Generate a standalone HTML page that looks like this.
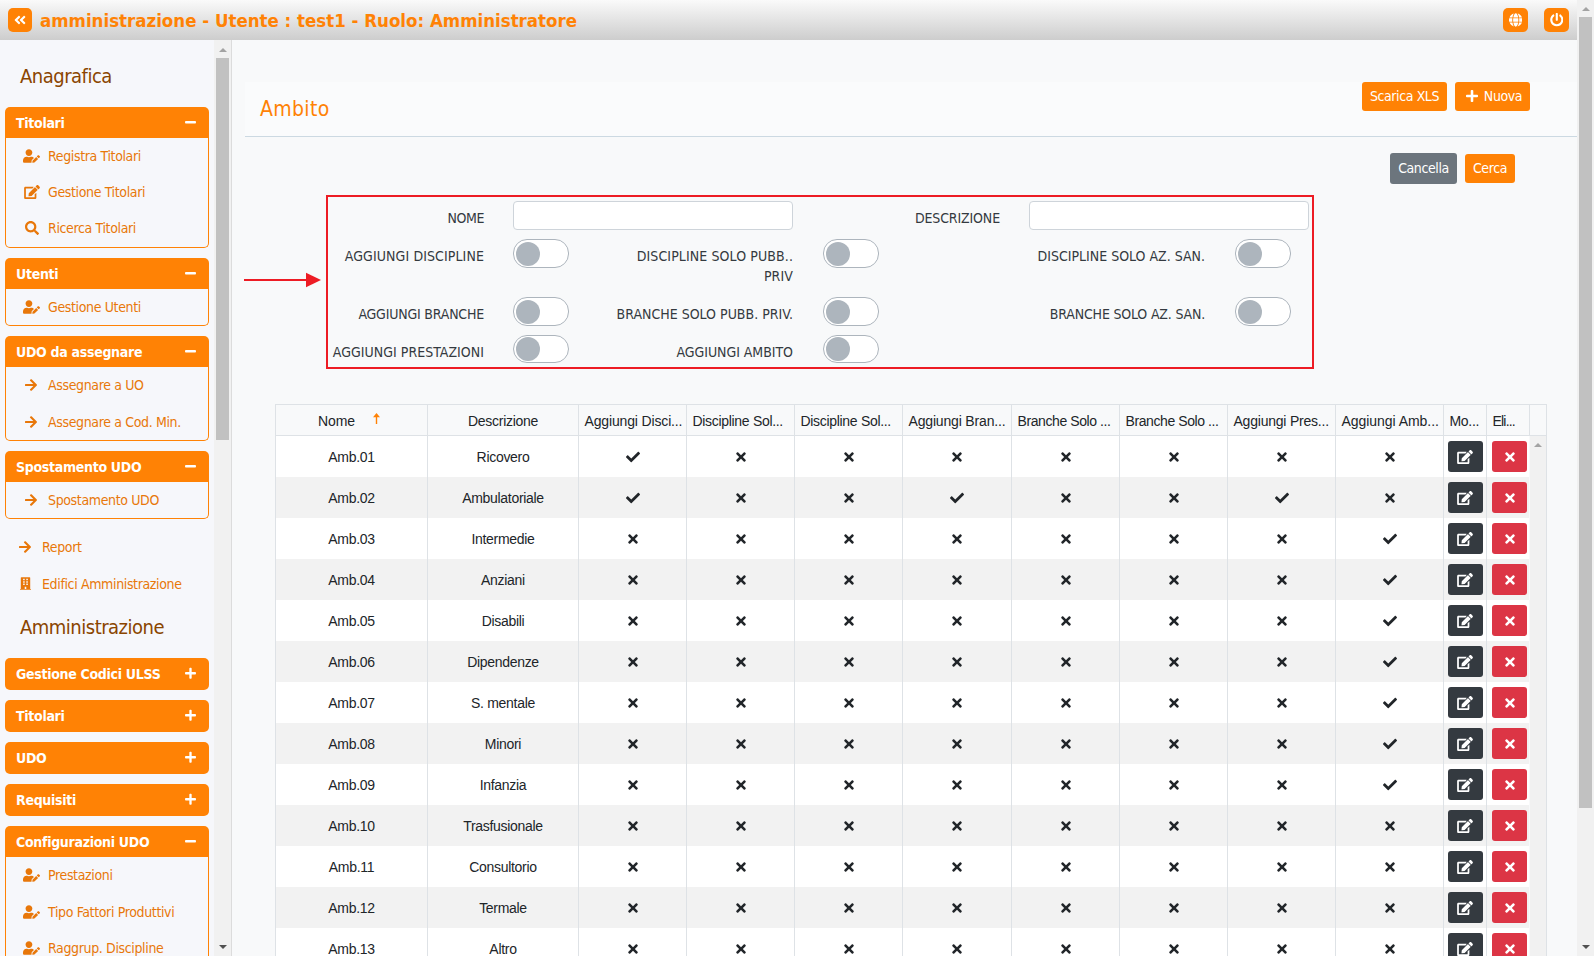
<!DOCTYPE html>
<html lang="it"><head><meta charset="utf-8"><title>Ambito</title>
<style>
*{box-sizing:border-box}
html,body{margin:0;padding:0}
body{width:1594px;height:956px;overflow:hidden;position:relative;background:#f8f9fa;font-family:"DejaVu Sans Condensed","Liberation Sans",sans-serif;font-size:14px;color:#212529}
.ic{display:inline-block;fill:currentColor}
#hdr{position:absolute;left:0;top:0;width:1577px;height:40px;background:linear-gradient(#fafafa,#cdcdcd);z-index:5}
.hb{position:absolute;top:8px;width:24px;height:24px;border-radius:5px;background:#ff8205}
.hb.w25{width:25px}
.ttl{position:absolute;left:40px;top:9px;font-weight:bold;font-size:18.500px;line-height:24px;color:#ff8205;white-space:nowrap;letter-spacing:0}
#side{position:absolute;left:0;top:40px;width:214px;height:916px;background:#f6f7fb;overflow:hidden}
#ssb{position:absolute;left:214px;top:40px;width:18px;height:916px;background:#f1f1f1;border-right:1px solid #dcdcdc}
#psb{position:absolute;left:1577px;top:0;width:17px;height:956px;background:#f1f1f1}
.th{position:absolute;left:2px;width:13px;background:#c1c1c1}
#ssb .th{left:2px}
.ua{position:absolute;width:0;height:0;border-left:4px solid transparent;border-right:4px solid transparent;border-bottom:4px solid #a3a3a3}
.da{position:absolute;width:0;height:0;border-left:4px solid transparent;border-right:4px solid transparent;border-top:4px solid #505050}
.sh{position:absolute;left:20px;font-size:20px;line-height:26px;color:#8a4500;letter-spacing:-0.5px;white-space:nowrap}
.pnl{position:absolute;left:5px;width:204px}
.ph{height:31px;background:#ff8205;border-radius:5px 5px 0 0;position:relative;color:#fff}
.ph.closed{border-radius:5px;height:32px}
.pt{position:absolute;left:11px;top:7px;font-weight:bold;font-size:14px;line-height:18px;letter-spacing:-0.3px;white-space:nowrap}
.pb{position:relative;border:1px solid #ff8205;border-top:0;border-radius:0 0 5px 5px}
.it,.lnk{position:absolute;left:0;height:20px;color:#e8770a;white-space:nowrap}
.lnk{left:0}
.it span{position:absolute;left:42px;top:0;line-height:20px;letter-spacing:-0.36px}
.lnk span{position:absolute;left:42px;top:0;line-height:20px;letter-spacing:-0.36px}
#main{position:absolute;left:0;top:0;width:1577px;height:956px;overflow:hidden}
.card{position:absolute;left:245px;top:82px;width:1332px;height:55px;background:#fafbfc;border-bottom:1px solid #ccd9e2}
.ct{position:absolute;left:15px;top:13px;font-size:21px;line-height:28px;color:#ff8205;letter-spacing:0.35px}
.btn{position:absolute;border-radius:3px;color:#fff;text-align:center;white-space:nowrap;letter-spacing:-0.4px;line-height:28px}
.btn.or{background:#ff8205}
.btn.gy{background:#6c757d;line-height:30px}
.redbox{position:absolute;left:326px;top:195px;width:988px;height:174px;border:2px solid #ed1c24}
.lb{position:absolute;text-align:right;line-height:20px;letter-spacing:0.1px;margin-top:1px;color:#343a40;white-space:nowrap}
.inp{position:absolute;width:280px;height:29px;background:#fff;border:1px solid #ced4da;border-radius:4px}
.tg{position:absolute;width:56px;height:28px;border:1px solid #adb5bd;border-radius:14px;background:#fff}
.tg i{position:absolute;left:2px;top:1px;width:24px;height:24px;border-radius:50%;background:#adb5bd}
.grid{position:absolute;left:275px;top:404px;width:1272px;height:560px;font-family:"Liberation Sans",sans-serif;font-size:14px;color:#212529}
.gh{position:absolute;left:0;top:0;width:1272px;height:32px;background:#f8f9fa;border-top:1px solid #dee2e6;border-bottom:1px solid #dee2e6;border-right:1px solid #dee2e6}
.hc{position:absolute;top:0;height:30px;line-height:32px;padding-left:5.500px;white-space:nowrap;overflow:hidden;letter-spacing:-0.1px}
.hc.ctr{text-align:center;padding-left:0}
.srt{position:absolute;left:96px;top:8px;fill:#ff8205}
.gr{position:absolute;left:0;width:1254px;height:41px;background:#fff}
.gr.alt{background:#f2f2f2}
.gc{position:absolute;top:0;height:41px;line-height:43px;overflow:hidden;text-align:center;white-space:nowrap;font-size:14px;letter-spacing:-0.3px}
.vl{position:absolute;top:0;width:1px;height:560px;background:#dee2e6}
.bt{position:absolute;left:5px;top:5px;width:35px;height:31px;border-radius:3px}
.bt.dk{background:#343a40}
.bt.rd{background:#dc3545}
.gsb{position:absolute;left:1255px;top:32px;width:16px;height:530px;background:#f1f1f1}
.gsb .ua{left:4px;top:7px;border-bottom-color:#a3a3a3}

</style></head><body>
<svg width="0" height="0" style="position:absolute"><defs><symbol id="i-check" viewBox="0 0 512 512"><path d="M173.898 439.404l-166.4-166.4c-9.997-9.997-9.997-26.206 0-36.204l36.203-36.204c9.997-9.998 26.207-9.998 36.204 0L192 312.69 432.095 72.596c9.997-9.997 26.207-9.997 36.204 0l36.203 36.204c9.997 9.997 9.997 26.206 0 36.204l-294.4 294.401c-9.998 9.997-26.207 9.997-36.204-.001z"/></symbol><symbol id="i-times" viewBox="0 0 352 512"><path d="M242.72 256l100.07-100.07c12.28-12.28 12.28-32.19 0-44.48l-22.24-22.24c-12.28-12.28-32.19-12.28-44.48 0L176 189.28 75.93 89.21c-12.28-12.28-32.19-12.28-44.48 0L9.21 111.45c-12.28 12.28-12.28 32.19 0 44.48L109.28 256 9.21 356.07c-12.28 12.28-12.28 32.19 0 44.48l22.24 22.24c12.28 12.28 32.2 12.28 44.48 0L176 322.72l100.07 100.07c12.28 12.28 32.2 12.28 44.48 0l22.24-22.24c12.28-12.28 12.28-32.19 0-44.48L242.72 256z"/></symbol><symbol id="i-plus" viewBox="0 0 448 512"><path d="M416 208H272V64c0-17.67-14.33-32-32-32h-32c-17.67 0-32 14.33-32 32v144H32c-17.67 0-32 14.33-32 32v32c0 17.67 14.33 32 32 32h144v144c0 17.67 14.33 32 32 32h32c17.67 0 32-14.33 32-32V304h144c17.67 0 32-14.33 32-32v-32c0-17.67-14.33-32-32-32z"/></symbol><symbol id="i-minus" viewBox="0 0 448 512"><path d="M416 208H32c-17.67 0-32 14.33-32 32v32c0 17.67 14.33 32 32 32h384c17.67 0 32-14.33 32-32v-32c0-17.67-14.33-32-32-32z"/></symbol><symbol id="i-search" viewBox="0 0 512 512"><path d="M505 442.7L405.3 343c-4.5-4.5-10.6-7-17-7H372c27.6-35.3 44-79.7 44-128C416 93.1 322.9 0 208 0S0 93.1 0 208s93.1 208 208 208c48.3 0 92.7-16.4 128-44v16.3c0 6.4 2.5 12.5 7 17l99.7 99.7c9.4 9.4 24.6 9.4 33.9 0l28.3-28.3c9.4-9.4 9.4-24.6.1-34zM208 336c-70.7 0-128-57.2-128-128 0-70.7 57.2-128 128-128 70.7 0 128 57.2 128 128 0 70.7-57.2 128-128 128z"/></symbol><symbol id="i-arrow-right" viewBox="0 0 448 512"><path d="M190.5 66.9l22.2-22.2c9.4-9.4 24.6-9.4 33.9 0L441 239c9.4 9.4 9.4 24.6 0 33.9L246.6 467.3c-9.4 9.4-24.6 9.4-33.9 0l-22.2-22.2c-9.5-9.5-9.3-25 .4-34.3L311.4 296H24c-13.3 0-24-10.7-24-24v-32c0-13.3 10.7-24 24-24h287.4L190.9 101.2c-9.8-9.3-10-24.800-.4-34.3z"/></symbol><symbol id="i-edit" viewBox="0 0 576 512"><path d="M402.6 83.2l90.2 90.2c3.8 3.8 3.8 10 0 13.800L274.4 405.6l-92.8 10.3c-12.4 1.400-22.9-9.100-21.500-21.500l10.300-92.800L388.800 83.200c3.800-3.800 10-3.800 13.800 0zm162-22.900l-48.800-48.800c-15.200-15.200-39.900-15.200-55.200 0l-35.400 35.400c-3.800 3.800-3.800 10 0 13.800l90.200 90.200c3.800 3.800 10 3.800 13.800 0l35.400-35.400c15.200-15.300 15.200-40 0-55.200zM384 346.200V448H64V128h229.800c3.200 0 6.200-1.300 8.500-3.500l40-40c7.600-7.600 2.200-20.500-8.500-20.500H48C21.500 64 0 85.500 0 112v352c0 26.500 21.500 48 48 48h352c26.500 0 48-21.500 48-48V306.200c0-10.700-12.900-16-20.500-8.500l-40 40c-2.200 2.300-3.500 5.300-3.500 8.500z"/></symbol><symbol id="i-power" viewBox="0 0 512 512"><path d="M400 54.1c63 45 104 118.600 104 201.900 0 136.800-110.800 247.700-247.500 248C120 504.300 8.200 393 8 256.400 7.900 173.100 48.900 99.300 111.800 54.200c11.700-8.300 28-4.800 35 7.700L162.600 90c5.900 10.500 3.100 23.800-6.600 31-41.500 30.800-68 79.600-68 134.900-.1 92.300 74.500 168.100 168 168.100 91.600 0 168.600-74.200 168-169.100-.3-51.800-24.700-101.800-68.100-134-9.700-7.200-12.400-20.500-6.500-30.900l15.800-28.100c7-12.400 23.200-16.100 34.800-7.800zM296 264V24c0-13.300-10.700-24-24-24h-32c-13.300 0-24 10.700-24 24v240c0 13.300 10.700 24 24 24h32c13.300 0 24-10.700 24-24z"/></symbol><symbol id="i-dleft" viewBox="0 0 448 512"><path d="M223.700 239l136-136c9.400-9.400 24.600-9.400 33.900 0l22.600 22.600c9.400 9.400 9.400 24.600 0 33.900L319.900 256l96.400 96.400c9.400 9.400 9.400 24.600 0 33.900L393.700 409c-9.400 9.400-24.600 9.400-33.900 0l-136-136c-9.500-9.400-9.500-24.600-.1-34zm-192 34l136 136c9.400 9.400 24.600 9.400 33.900 0l22.600-22.600c9.400-9.400 9.400-24.600 0-33.900L127.900 256l96.400-96.400c9.400-9.400 9.400-24.600 0-33.900L201.700 103c-9.400-9.400-24.600-9.400-33.900 0l-136 136c-9.500 9.400-9.500 24.600-.1 34z"/></symbol><symbol id="i-user-edit" viewBox="0 0 640 512"><path d="M224 256c70.700 0 128-57.300 128-128S294.700 0 224 0 96 57.300 96 128s57.300 128 128 128zm89.600 32h-16.700c-22.200 10.200-46.900 16-72.900 16s-50.600-5.800-72.900-16h-16.700C60.200 288 0 348.200 0 422.400V464c0 26.500 21.500 48 48 48h274.900c-2.400-6.800-3.400-14-2.600-21.300l6.800-60.900 1.200-11.100 7.900-7.900 77.300-77.300c-24.500-27.700-60-45.500-99.900-45.500zm45.300 145.300l-6.800 61c-1.100 10.200 7.500 18.800 17.600 17.600l60.900-6.800 137.900-137.900-71.700-71.700-137.900 137.800zM633 268.900L595.100 231c-9.300-9.300-24.500-9.300-33.800 0l-37.800 37.800-4.100 4.100 71.800 71.700 41.800-41.800c9.300-9.400 9.300-24.500 0-33.900z"/></symbol><symbol id="i-globe" viewBox="0 0 496 512"><path d="M336.5 160C322 70.700 287.800 8 248 8s-74 62.700-88.500 152h177zM152 256c0 22.200 1.200 43.500 3.300 64h185.300c2.100-20.500 3.300-41.800 3.300-64s-1.200-43.500-3.300-64H155.300c-2.100 20.500-3.300 41.800-3.300 64zm324.700-96c-28.600-67.900-86.500-120.400-158-141.600 24.400 33.800 41.200 84.700 50 141.600h108zM177.200 18.400C105.800 39.600 47.800 92.100 19.300 160h108c8.700-56.900 25.500-107.800 49.900-141.600zM487.400 192H372.700c2.100 21 3.300 42.500 3.300 64s-1.200 43-3.300 64h114.600c5.500-20.500 8.600-41.800 8.600-64s-3.100-43.500-8.500-64zM120 256c0-21.500 1.200-43 3.300-64H8.600C3.200 212.500 0 233.800 0 256s3.200 43.500 8.600 64h114.600c-2-21-3.200-42.500-3.200-64zm39.500 96c14.500 89.300 48.700 152 88.500 152s74-62.700 88.500-152h-177zm159.300 141.600c71.400-21.200 129.400-73.700 158-141.600h-108c-8.800 56.900-25.600 107.800-50 141.600zM19.300 352c28.600 67.900 86.500 120.400 158 141.600-24.400-33.800-41.200-84.700-50-141.600h-108z"/></symbol><symbol id="i-building" viewBox="0 0 448 512"><path d="M436 480h-20V24c0-13.255-10.745-24-24-24H56C42.745 0 32 10.745 32 24v456H12c-6.627 0-12 5.373-12 12v20h448v-20c0-6.627-5.373-12-12-12zM128 76c0-6.627 5.373-12 12-12h40c6.627 0 12 5.373 12 12v40c0 6.627-5.373 12-12 12h-40c-6.627 0-12-5.373-12-12V76zm0 96c0-6.627 5.373-12 12-12h40c6.627 0 12 5.373 12 12v40c0 6.627-5.373 12-12 12h-40c-6.627 0-12-5.373-12-12v-40zm52 148h-40c-6.627 0-12-5.373-12-12v-40c0-6.627 5.373-12 12-12h40c6.627 0 12 5.373 12 12v40c0 6.627-5.373 12-12 12zm76 160h-64v-84c0-6.627 5.373-12 12-12h40c6.627 0 12 5.373 12 12v84zm64-172c0 6.627-5.373 12-12 12h-40c-6.627 0-12-5.373-12-12v-40c0-6.627 5.373-12 12-12h40c6.627 0 12 5.373 12 12v40zm0-96c0 6.627-5.373 12-12 12h-40c-6.627 0-12-5.373-12-12v-40c0-6.627 5.373-12 12-12h40c6.627 0 12 5.373 12 12v40zm0-96c0 6.627-5.373 12-12 12h-40c-6.627 0-12-5.373-12-12V76c0-6.627 5.373-12 12-12h40c6.627 0 12 5.373 12 12v40z"/></symbol></defs></svg>
<div id="hdr">
  <div class="hb" style="left:8px"><svg class="ic" width="12" height="14" style="fill:#fff;position:absolute;left:6px;top:5px"><use href="#i-dleft"/></svg></div>
  <div class="ttl">amministrazione - Utente : test1 - Ruolo: Amministratore</div>
  <div class="hb w25" style="left:1503px"><svg class="ic" width="13.5" height="14" style="fill:#fff;position:absolute;left:5.800px;top:5px"><use href="#i-globe"/></svg></div>
  <div class="hb w25" style="left:1544px"><svg class="ic" width="13.6" height="13.6" style="fill:#fff;position:absolute;left:5.700px;top:5.200px"><use href="#i-power"/></svg></div>
</div>
<div id="side"><div class="sh" style="top:23px">Anagrafica</div><div class="pnl" style="top:67px"><div class="ph"><span class="pt">Titolari</span><svg class="ic" width="11" height="12.5" style="position:absolute;right:13px;top:9px;fill:#fff"><use href="#i-minus"/></svg></div><div class="pb" style="height:110px"><div class="it" style="top:8px"><svg class="ic" width="17" height="14" style="position:absolute;left:17px;top:3px"><use href="#i-user-edit"/></svg><span>Registra Titolari</span></div><div class="it" style="top:44px"><svg class="ic" width="16" height="14" style="position:absolute;left:18px;top:3px"><use href="#i-edit"/></svg><span>Gestione Titolari</span></div><div class="it" style="top:80px"><svg class="ic" width="14" height="14" style="position:absolute;left:19px;top:3px"><use href="#i-search"/></svg><span>Ricerca Titolari</span></div></div></div><div class="pnl" style="top:218px"><div class="ph"><span class="pt">Utenti</span><svg class="ic" width="11" height="12.5" style="position:absolute;right:13px;top:9px;fill:#fff"><use href="#i-minus"/></svg></div><div class="pb" style="height:37px"><div class="it" style="top:8px"><svg class="ic" width="17" height="14" style="position:absolute;left:17px;top:3px"><use href="#i-user-edit"/></svg><span>Gestione Utenti</span></div></div></div><div class="pnl" style="top:296px"><div class="ph"><span class="pt">UDO da assegnare</span><svg class="ic" width="11" height="12.5" style="position:absolute;right:13px;top:9px;fill:#fff"><use href="#i-minus"/></svg></div><div class="pb" style="height:74px"><div class="it" style="top:8px"><svg class="ic" width="12" height="14" style="position:absolute;left:19px;top:3px"><use href="#i-arrow-right"/></svg><span>Assegnare a UO</span></div><div class="it" style="top:45px"><svg class="ic" width="12" height="14" style="position:absolute;left:19px;top:3px"><use href="#i-arrow-right"/></svg><span>Assegnare a Cod. Min.</span></div></div></div><div class="pnl" style="top:411px"><div class="ph"><span class="pt">Spostamento UDO</span><svg class="ic" width="11" height="12.5" style="position:absolute;right:13px;top:9px;fill:#fff"><use href="#i-minus"/></svg></div><div class="pb" style="height:37px"><div class="it" style="top:8px"><svg class="ic" width="12" height="14" style="position:absolute;left:19px;top:3px"><use href="#i-arrow-right"/></svg><span>Spostamento UDO</span></div></div></div><div class="lnk" style="top:497px"><svg class="ic" width="12" height="14" style="position:absolute;left:19px;top:3px"><use href="#i-arrow-right"/></svg><span>Report</span></div><div class="lnk" style="top:534px"><svg class="ic" width="11" height="13" style="position:absolute;left:20px;top:3px"><use href="#i-building"/></svg><span>Edifici Amministrazione</span></div><div class="sh" style="top:574px">Amministrazione</div><div class="pnl" style="top:618px"><div class="ph closed"><span class="pt">Gestione Codici ULSS</span><svg class="ic" width="11" height="12.5" style="position:absolute;right:13px;top:9px;fill:#fff"><use href="#i-plus"/></svg></div></div><div class="pnl" style="top:660px"><div class="ph closed"><span class="pt">Titolari</span><svg class="ic" width="11" height="12.5" style="position:absolute;right:13px;top:9px;fill:#fff"><use href="#i-plus"/></svg></div></div><div class="pnl" style="top:702px"><div class="ph closed"><span class="pt">UDO</span><svg class="ic" width="11" height="12.5" style="position:absolute;right:13px;top:9px;fill:#fff"><use href="#i-plus"/></svg></div></div><div class="pnl" style="top:744px"><div class="ph closed"><span class="pt">Requisiti</span><svg class="ic" width="11" height="12.5" style="position:absolute;right:13px;top:9px;fill:#fff"><use href="#i-plus"/></svg></div></div><div class="pnl" style="top:786px"><div class="ph"><span class="pt">Configurazioni UDO</span><svg class="ic" width="11" height="12.5" style="position:absolute;right:13px;top:9px;fill:#fff"><use href="#i-minus"/></svg></div><div class="pb" style="height:140px"><div class="it" style="top:8px"><svg class="ic" width="17" height="14" style="position:absolute;left:17px;top:3px"><use href="#i-user-edit"/></svg><span>Prestazioni</span></div><div class="it" style="top:45px"><svg class="ic" width="17" height="14" style="position:absolute;left:17px;top:3px"><use href="#i-user-edit"/></svg><span>Tipo Fattori Produttivi</span></div><div class="it" style="top:81px"><svg class="ic" width="17" height="14" style="position:absolute;left:17px;top:3px"><use href="#i-user-edit"/></svg><span>Raggrup. Discipline</span></div></div></div></div>
<div id="ssb"><div class="ua" style="left:4.500px;top:8px"></div><div class="th" style="top:18px;height:382px"></div><div class="da" style="left:4.500px;top:905px"></div></div>
<div id="main">
  <div class="card"><div class="ct">Ambito</div></div>
  <div class="btn or" style="left:1362px;top:82px;width:85px;height:29px">Scarica XLS</div>
  <div class="btn or" style="left:1455px;top:82px;width:75px;height:29px;padding-left:3px"><svg class="ic" width="12" height="14" style="fill:#fff;vertical-align:-2px;margin-right:6px"><use href="#i-plus"/></svg>Nuova</div>
  <div class="btn gy" style="left:1390px;top:153px;width:67px;height:31px">Cancella</div>
  <div class="btn or" style="left:1465px;top:154px;width:50px;height:29px">Cerca</div>
  <svg style="position:absolute;left:240px;top:270px" width="90" height="20"><path d="M4 10H67" stroke="#ed1c24" stroke-width="2"/><path d="M66 2.700L81 10L66 17.300Z" fill="#ed1c24"/></svg>
  <div class="redbox"></div>
  <div class="lb" style="left:184px;width:300px;top:207px;letter-spacing:-0.4px">NOME</div><div class="inp" style="left:513px;top:201px"></div><div class="lb" style="left:700px;width:300px;top:207px;letter-spacing:-0.13px">DESCRIZIONE</div><div class="inp" style="left:1029px;top:201px"></div><div class="lb" style="left:184px;width:300px;top:245px;letter-spacing:0.1px">AGGIUNGI DISCIPLINE</div><div class="tg" style="left:513px;top:239px;height:29px"><i style="top:2px"></i></div><div class="lb" style="left:623px;width:170px;top:245px;letter-spacing:0.1px">DISCIPLINE SOLO PUBB..<br>PRIV</div><div class="tg" style="left:823px;top:239px;height:29px"><i style="top:2px"></i></div><div class="lb" style="left:905px;width:300px;top:245px;letter-spacing:0px">DISCIPLINE SOLO AZ. SAN.</div><div class="tg" style="left:1235px;top:239px;height:29px"><i style="top:2px"></i></div><div class="lb" style="left:184px;width:300px;top:303px;letter-spacing:-0.2px">AGGIUNGI BRANCHE</div><div class="tg" style="left:513px;top:297px;height:29px"><i style="top:2px"></i></div><div class="lb" style="left:493px;width:300px;top:303px;letter-spacing:0px">BRANCHE SOLO PUBB. PRIV.</div><div class="tg" style="left:823px;top:297px;height:29px"><i style="top:2px"></i></div><div class="lb" style="left:905px;width:300px;top:303px;letter-spacing:-0.18px">BRANCHE SOLO AZ. SAN.</div><div class="tg" style="left:1235px;top:297px;height:29px"><i style="top:2px"></i></div><div class="lb" style="left:184px;width:300px;top:341px;letter-spacing:0.03px">AGGIUNGI PRESTAZIONI</div><div class="tg" style="left:513px;top:335px"><i></i></div><div class="lb" style="left:493px;width:300px;top:341px;letter-spacing:-0.04px">AGGIUNGI AMBITO</div><div class="tg" style="left:823px;top:335px"><i></i></div>
  <div class="grid"><div class="gh"><div class="hc" style="left:1px;width:151px;padding-left:42px">Nome<svg class="srt" width="9" height="12" viewBox="0 0 9 12"><path d="M4.500 0 L8 4.300 L5.200 4.300 L5.200 11 L3.800 11 L3.800 4.300 L1 4.300 Z"/></svg></div><div class="hc ctr" style="left:153px;width:150px;letter-spacing:-0.28px">Descrizione</div><div class="hc" style="left:304px;width:107px;letter-spacing:-0.15px">Aggiungi Disci...</div><div class="hc" style="left:412px;width:107px;letter-spacing:-0.31px">Discipline Sol...</div><div class="hc" style="left:520px;width:107px;letter-spacing:-0.31px">Discipline Sol...</div><div class="hc" style="left:628px;width:108px;letter-spacing:-0.17px">Aggiungi Bran...</div><div class="hc" style="left:737px;width:107px;letter-spacing:-0.41px">Branche Solo ...</div><div class="hc" style="left:845px;width:107px;letter-spacing:-0.41px">Branche Solo ...</div><div class="hc" style="left:953px;width:107px;letter-spacing:-0.22px">Aggiungi Pres...</div><div class="hc" style="left:1061px;width:107px;letter-spacing:-0.05px">Aggiungi Amb...</div><div class="hc" style="left:1169px;width:42px;letter-spacing:-0.3px">Mo...</div><div class="hc" style="left:1212px;width:42px;letter-spacing:-0.8px">Eli...</div><div class="hc" style="left:1255px;width:16px;letter-spacing:0px"></div></div><div class="gr" style="top:32px"><div class="gc" style="left:1px;width:151px">Amb.01</div><div class="gc" style="left:153px;width:150px">Ricovero</div><div class="gc" style="left:304px;width:107px"><svg class="ic" width="14" height="14" style="margin-top:14px"><use href="#i-check"/></svg></div><div class="gc" style="left:412px;width:107px"><svg class="ic" width="10" height="14" style="margin-top:14px"><use href="#i-times"/></svg></div><div class="gc" style="left:520px;width:107px"><svg class="ic" width="10" height="14" style="margin-top:14px"><use href="#i-times"/></svg></div><div class="gc" style="left:628px;width:108px"><svg class="ic" width="10" height="14" style="margin-top:14px"><use href="#i-times"/></svg></div><div class="gc" style="left:737px;width:107px"><svg class="ic" width="10" height="14" style="margin-top:14px"><use href="#i-times"/></svg></div><div class="gc" style="left:845px;width:107px"><svg class="ic" width="10" height="14" style="margin-top:14px"><use href="#i-times"/></svg></div><div class="gc" style="left:953px;width:107px"><svg class="ic" width="10" height="14" style="margin-top:14px"><use href="#i-times"/></svg></div><div class="gc" style="left:1061px;width:107px"><svg class="ic" width="10" height="14" style="margin-top:14px"><use href="#i-times"/></svg></div><div class="gc" style="left:1169px;width:42px"><div class="bt dk" style="left:4px"><svg class="ic" width="16" height="14" style="fill:#fff;position:absolute;left:9px;top:9px"><use href="#i-edit"/></svg></div></div><div class="gc" style="left:1212px;width:42px"><div class="bt rd"><svg class="ic" width="10" height="14" style="fill:#fff;position:absolute;left:12.500px;top:9px"><use href="#i-times"/></svg></div></div></div><div class="gr alt" style="top:73px"><div class="gc" style="left:1px;width:151px">Amb.02</div><div class="gc" style="left:153px;width:150px">Ambulatoriale</div><div class="gc" style="left:304px;width:107px"><svg class="ic" width="14" height="14" style="margin-top:14px"><use href="#i-check"/></svg></div><div class="gc" style="left:412px;width:107px"><svg class="ic" width="10" height="14" style="margin-top:14px"><use href="#i-times"/></svg></div><div class="gc" style="left:520px;width:107px"><svg class="ic" width="10" height="14" style="margin-top:14px"><use href="#i-times"/></svg></div><div class="gc" style="left:628px;width:108px"><svg class="ic" width="14" height="14" style="margin-top:14px"><use href="#i-check"/></svg></div><div class="gc" style="left:737px;width:107px"><svg class="ic" width="10" height="14" style="margin-top:14px"><use href="#i-times"/></svg></div><div class="gc" style="left:845px;width:107px"><svg class="ic" width="10" height="14" style="margin-top:14px"><use href="#i-times"/></svg></div><div class="gc" style="left:953px;width:107px"><svg class="ic" width="14" height="14" style="margin-top:14px"><use href="#i-check"/></svg></div><div class="gc" style="left:1061px;width:107px"><svg class="ic" width="10" height="14" style="margin-top:14px"><use href="#i-times"/></svg></div><div class="gc" style="left:1169px;width:42px"><div class="bt dk" style="left:4px"><svg class="ic" width="16" height="14" style="fill:#fff;position:absolute;left:9px;top:9px"><use href="#i-edit"/></svg></div></div><div class="gc" style="left:1212px;width:42px"><div class="bt rd"><svg class="ic" width="10" height="14" style="fill:#fff;position:absolute;left:12.500px;top:9px"><use href="#i-times"/></svg></div></div></div><div class="gr" style="top:114px"><div class="gc" style="left:1px;width:151px">Amb.03</div><div class="gc" style="left:153px;width:150px">Intermedie</div><div class="gc" style="left:304px;width:107px"><svg class="ic" width="10" height="14" style="margin-top:14px"><use href="#i-times"/></svg></div><div class="gc" style="left:412px;width:107px"><svg class="ic" width="10" height="14" style="margin-top:14px"><use href="#i-times"/></svg></div><div class="gc" style="left:520px;width:107px"><svg class="ic" width="10" height="14" style="margin-top:14px"><use href="#i-times"/></svg></div><div class="gc" style="left:628px;width:108px"><svg class="ic" width="10" height="14" style="margin-top:14px"><use href="#i-times"/></svg></div><div class="gc" style="left:737px;width:107px"><svg class="ic" width="10" height="14" style="margin-top:14px"><use href="#i-times"/></svg></div><div class="gc" style="left:845px;width:107px"><svg class="ic" width="10" height="14" style="margin-top:14px"><use href="#i-times"/></svg></div><div class="gc" style="left:953px;width:107px"><svg class="ic" width="10" height="14" style="margin-top:14px"><use href="#i-times"/></svg></div><div class="gc" style="left:1061px;width:107px"><svg class="ic" width="14" height="14" style="margin-top:14px"><use href="#i-check"/></svg></div><div class="gc" style="left:1169px;width:42px"><div class="bt dk" style="left:4px"><svg class="ic" width="16" height="14" style="fill:#fff;position:absolute;left:9px;top:9px"><use href="#i-edit"/></svg></div></div><div class="gc" style="left:1212px;width:42px"><div class="bt rd"><svg class="ic" width="10" height="14" style="fill:#fff;position:absolute;left:12.500px;top:9px"><use href="#i-times"/></svg></div></div></div><div class="gr alt" style="top:155px"><div class="gc" style="left:1px;width:151px">Amb.04</div><div class="gc" style="left:153px;width:150px">Anziani</div><div class="gc" style="left:304px;width:107px"><svg class="ic" width="10" height="14" style="margin-top:14px"><use href="#i-times"/></svg></div><div class="gc" style="left:412px;width:107px"><svg class="ic" width="10" height="14" style="margin-top:14px"><use href="#i-times"/></svg></div><div class="gc" style="left:520px;width:107px"><svg class="ic" width="10" height="14" style="margin-top:14px"><use href="#i-times"/></svg></div><div class="gc" style="left:628px;width:108px"><svg class="ic" width="10" height="14" style="margin-top:14px"><use href="#i-times"/></svg></div><div class="gc" style="left:737px;width:107px"><svg class="ic" width="10" height="14" style="margin-top:14px"><use href="#i-times"/></svg></div><div class="gc" style="left:845px;width:107px"><svg class="ic" width="10" height="14" style="margin-top:14px"><use href="#i-times"/></svg></div><div class="gc" style="left:953px;width:107px"><svg class="ic" width="10" height="14" style="margin-top:14px"><use href="#i-times"/></svg></div><div class="gc" style="left:1061px;width:107px"><svg class="ic" width="14" height="14" style="margin-top:14px"><use href="#i-check"/></svg></div><div class="gc" style="left:1169px;width:42px"><div class="bt dk" style="left:4px"><svg class="ic" width="16" height="14" style="fill:#fff;position:absolute;left:9px;top:9px"><use href="#i-edit"/></svg></div></div><div class="gc" style="left:1212px;width:42px"><div class="bt rd"><svg class="ic" width="10" height="14" style="fill:#fff;position:absolute;left:12.500px;top:9px"><use href="#i-times"/></svg></div></div></div><div class="gr" style="top:196px"><div class="gc" style="left:1px;width:151px">Amb.05</div><div class="gc" style="left:153px;width:150px">Disabili</div><div class="gc" style="left:304px;width:107px"><svg class="ic" width="10" height="14" style="margin-top:14px"><use href="#i-times"/></svg></div><div class="gc" style="left:412px;width:107px"><svg class="ic" width="10" height="14" style="margin-top:14px"><use href="#i-times"/></svg></div><div class="gc" style="left:520px;width:107px"><svg class="ic" width="10" height="14" style="margin-top:14px"><use href="#i-times"/></svg></div><div class="gc" style="left:628px;width:108px"><svg class="ic" width="10" height="14" style="margin-top:14px"><use href="#i-times"/></svg></div><div class="gc" style="left:737px;width:107px"><svg class="ic" width="10" height="14" style="margin-top:14px"><use href="#i-times"/></svg></div><div class="gc" style="left:845px;width:107px"><svg class="ic" width="10" height="14" style="margin-top:14px"><use href="#i-times"/></svg></div><div class="gc" style="left:953px;width:107px"><svg class="ic" width="10" height="14" style="margin-top:14px"><use href="#i-times"/></svg></div><div class="gc" style="left:1061px;width:107px"><svg class="ic" width="14" height="14" style="margin-top:14px"><use href="#i-check"/></svg></div><div class="gc" style="left:1169px;width:42px"><div class="bt dk" style="left:4px"><svg class="ic" width="16" height="14" style="fill:#fff;position:absolute;left:9px;top:9px"><use href="#i-edit"/></svg></div></div><div class="gc" style="left:1212px;width:42px"><div class="bt rd"><svg class="ic" width="10" height="14" style="fill:#fff;position:absolute;left:12.500px;top:9px"><use href="#i-times"/></svg></div></div></div><div class="gr alt" style="top:237px"><div class="gc" style="left:1px;width:151px">Amb.06</div><div class="gc" style="left:153px;width:150px">Dipendenze</div><div class="gc" style="left:304px;width:107px"><svg class="ic" width="10" height="14" style="margin-top:14px"><use href="#i-times"/></svg></div><div class="gc" style="left:412px;width:107px"><svg class="ic" width="10" height="14" style="margin-top:14px"><use href="#i-times"/></svg></div><div class="gc" style="left:520px;width:107px"><svg class="ic" width="10" height="14" style="margin-top:14px"><use href="#i-times"/></svg></div><div class="gc" style="left:628px;width:108px"><svg class="ic" width="10" height="14" style="margin-top:14px"><use href="#i-times"/></svg></div><div class="gc" style="left:737px;width:107px"><svg class="ic" width="10" height="14" style="margin-top:14px"><use href="#i-times"/></svg></div><div class="gc" style="left:845px;width:107px"><svg class="ic" width="10" height="14" style="margin-top:14px"><use href="#i-times"/></svg></div><div class="gc" style="left:953px;width:107px"><svg class="ic" width="10" height="14" style="margin-top:14px"><use href="#i-times"/></svg></div><div class="gc" style="left:1061px;width:107px"><svg class="ic" width="14" height="14" style="margin-top:14px"><use href="#i-check"/></svg></div><div class="gc" style="left:1169px;width:42px"><div class="bt dk" style="left:4px"><svg class="ic" width="16" height="14" style="fill:#fff;position:absolute;left:9px;top:9px"><use href="#i-edit"/></svg></div></div><div class="gc" style="left:1212px;width:42px"><div class="bt rd"><svg class="ic" width="10" height="14" style="fill:#fff;position:absolute;left:12.500px;top:9px"><use href="#i-times"/></svg></div></div></div><div class="gr" style="top:278px"><div class="gc" style="left:1px;width:151px">Amb.07</div><div class="gc" style="left:153px;width:150px">S. mentale</div><div class="gc" style="left:304px;width:107px"><svg class="ic" width="10" height="14" style="margin-top:14px"><use href="#i-times"/></svg></div><div class="gc" style="left:412px;width:107px"><svg class="ic" width="10" height="14" style="margin-top:14px"><use href="#i-times"/></svg></div><div class="gc" style="left:520px;width:107px"><svg class="ic" width="10" height="14" style="margin-top:14px"><use href="#i-times"/></svg></div><div class="gc" style="left:628px;width:108px"><svg class="ic" width="10" height="14" style="margin-top:14px"><use href="#i-times"/></svg></div><div class="gc" style="left:737px;width:107px"><svg class="ic" width="10" height="14" style="margin-top:14px"><use href="#i-times"/></svg></div><div class="gc" style="left:845px;width:107px"><svg class="ic" width="10" height="14" style="margin-top:14px"><use href="#i-times"/></svg></div><div class="gc" style="left:953px;width:107px"><svg class="ic" width="10" height="14" style="margin-top:14px"><use href="#i-times"/></svg></div><div class="gc" style="left:1061px;width:107px"><svg class="ic" width="14" height="14" style="margin-top:14px"><use href="#i-check"/></svg></div><div class="gc" style="left:1169px;width:42px"><div class="bt dk" style="left:4px"><svg class="ic" width="16" height="14" style="fill:#fff;position:absolute;left:9px;top:9px"><use href="#i-edit"/></svg></div></div><div class="gc" style="left:1212px;width:42px"><div class="bt rd"><svg class="ic" width="10" height="14" style="fill:#fff;position:absolute;left:12.500px;top:9px"><use href="#i-times"/></svg></div></div></div><div class="gr alt" style="top:319px"><div class="gc" style="left:1px;width:151px">Amb.08</div><div class="gc" style="left:153px;width:150px">Minori</div><div class="gc" style="left:304px;width:107px"><svg class="ic" width="10" height="14" style="margin-top:14px"><use href="#i-times"/></svg></div><div class="gc" style="left:412px;width:107px"><svg class="ic" width="10" height="14" style="margin-top:14px"><use href="#i-times"/></svg></div><div class="gc" style="left:520px;width:107px"><svg class="ic" width="10" height="14" style="margin-top:14px"><use href="#i-times"/></svg></div><div class="gc" style="left:628px;width:108px"><svg class="ic" width="10" height="14" style="margin-top:14px"><use href="#i-times"/></svg></div><div class="gc" style="left:737px;width:107px"><svg class="ic" width="10" height="14" style="margin-top:14px"><use href="#i-times"/></svg></div><div class="gc" style="left:845px;width:107px"><svg class="ic" width="10" height="14" style="margin-top:14px"><use href="#i-times"/></svg></div><div class="gc" style="left:953px;width:107px"><svg class="ic" width="10" height="14" style="margin-top:14px"><use href="#i-times"/></svg></div><div class="gc" style="left:1061px;width:107px"><svg class="ic" width="14" height="14" style="margin-top:14px"><use href="#i-check"/></svg></div><div class="gc" style="left:1169px;width:42px"><div class="bt dk" style="left:4px"><svg class="ic" width="16" height="14" style="fill:#fff;position:absolute;left:9px;top:9px"><use href="#i-edit"/></svg></div></div><div class="gc" style="left:1212px;width:42px"><div class="bt rd"><svg class="ic" width="10" height="14" style="fill:#fff;position:absolute;left:12.500px;top:9px"><use href="#i-times"/></svg></div></div></div><div class="gr" style="top:360px"><div class="gc" style="left:1px;width:151px">Amb.09</div><div class="gc" style="left:153px;width:150px">Infanzia</div><div class="gc" style="left:304px;width:107px"><svg class="ic" width="10" height="14" style="margin-top:14px"><use href="#i-times"/></svg></div><div class="gc" style="left:412px;width:107px"><svg class="ic" width="10" height="14" style="margin-top:14px"><use href="#i-times"/></svg></div><div class="gc" style="left:520px;width:107px"><svg class="ic" width="10" height="14" style="margin-top:14px"><use href="#i-times"/></svg></div><div class="gc" style="left:628px;width:108px"><svg class="ic" width="10" height="14" style="margin-top:14px"><use href="#i-times"/></svg></div><div class="gc" style="left:737px;width:107px"><svg class="ic" width="10" height="14" style="margin-top:14px"><use href="#i-times"/></svg></div><div class="gc" style="left:845px;width:107px"><svg class="ic" width="10" height="14" style="margin-top:14px"><use href="#i-times"/></svg></div><div class="gc" style="left:953px;width:107px"><svg class="ic" width="10" height="14" style="margin-top:14px"><use href="#i-times"/></svg></div><div class="gc" style="left:1061px;width:107px"><svg class="ic" width="14" height="14" style="margin-top:14px"><use href="#i-check"/></svg></div><div class="gc" style="left:1169px;width:42px"><div class="bt dk" style="left:4px"><svg class="ic" width="16" height="14" style="fill:#fff;position:absolute;left:9px;top:9px"><use href="#i-edit"/></svg></div></div><div class="gc" style="left:1212px;width:42px"><div class="bt rd"><svg class="ic" width="10" height="14" style="fill:#fff;position:absolute;left:12.500px;top:9px"><use href="#i-times"/></svg></div></div></div><div class="gr alt" style="top:401px"><div class="gc" style="left:1px;width:151px">Amb.10</div><div class="gc" style="left:153px;width:150px">Trasfusionale</div><div class="gc" style="left:304px;width:107px"><svg class="ic" width="10" height="14" style="margin-top:14px"><use href="#i-times"/></svg></div><div class="gc" style="left:412px;width:107px"><svg class="ic" width="10" height="14" style="margin-top:14px"><use href="#i-times"/></svg></div><div class="gc" style="left:520px;width:107px"><svg class="ic" width="10" height="14" style="margin-top:14px"><use href="#i-times"/></svg></div><div class="gc" style="left:628px;width:108px"><svg class="ic" width="10" height="14" style="margin-top:14px"><use href="#i-times"/></svg></div><div class="gc" style="left:737px;width:107px"><svg class="ic" width="10" height="14" style="margin-top:14px"><use href="#i-times"/></svg></div><div class="gc" style="left:845px;width:107px"><svg class="ic" width="10" height="14" style="margin-top:14px"><use href="#i-times"/></svg></div><div class="gc" style="left:953px;width:107px"><svg class="ic" width="10" height="14" style="margin-top:14px"><use href="#i-times"/></svg></div><div class="gc" style="left:1061px;width:107px"><svg class="ic" width="10" height="14" style="margin-top:14px"><use href="#i-times"/></svg></div><div class="gc" style="left:1169px;width:42px"><div class="bt dk" style="left:4px"><svg class="ic" width="16" height="14" style="fill:#fff;position:absolute;left:9px;top:9px"><use href="#i-edit"/></svg></div></div><div class="gc" style="left:1212px;width:42px"><div class="bt rd"><svg class="ic" width="10" height="14" style="fill:#fff;position:absolute;left:12.500px;top:9px"><use href="#i-times"/></svg></div></div></div><div class="gr" style="top:442px"><div class="gc" style="left:1px;width:151px">Amb.11</div><div class="gc" style="left:153px;width:150px">Consultorio</div><div class="gc" style="left:304px;width:107px"><svg class="ic" width="10" height="14" style="margin-top:14px"><use href="#i-times"/></svg></div><div class="gc" style="left:412px;width:107px"><svg class="ic" width="10" height="14" style="margin-top:14px"><use href="#i-times"/></svg></div><div class="gc" style="left:520px;width:107px"><svg class="ic" width="10" height="14" style="margin-top:14px"><use href="#i-times"/></svg></div><div class="gc" style="left:628px;width:108px"><svg class="ic" width="10" height="14" style="margin-top:14px"><use href="#i-times"/></svg></div><div class="gc" style="left:737px;width:107px"><svg class="ic" width="10" height="14" style="margin-top:14px"><use href="#i-times"/></svg></div><div class="gc" style="left:845px;width:107px"><svg class="ic" width="10" height="14" style="margin-top:14px"><use href="#i-times"/></svg></div><div class="gc" style="left:953px;width:107px"><svg class="ic" width="10" height="14" style="margin-top:14px"><use href="#i-times"/></svg></div><div class="gc" style="left:1061px;width:107px"><svg class="ic" width="10" height="14" style="margin-top:14px"><use href="#i-times"/></svg></div><div class="gc" style="left:1169px;width:42px"><div class="bt dk" style="left:4px"><svg class="ic" width="16" height="14" style="fill:#fff;position:absolute;left:9px;top:9px"><use href="#i-edit"/></svg></div></div><div class="gc" style="left:1212px;width:42px"><div class="bt rd"><svg class="ic" width="10" height="14" style="fill:#fff;position:absolute;left:12.500px;top:9px"><use href="#i-times"/></svg></div></div></div><div class="gr alt" style="top:483px"><div class="gc" style="left:1px;width:151px">Amb.12</div><div class="gc" style="left:153px;width:150px">Termale</div><div class="gc" style="left:304px;width:107px"><svg class="ic" width="10" height="14" style="margin-top:14px"><use href="#i-times"/></svg></div><div class="gc" style="left:412px;width:107px"><svg class="ic" width="10" height="14" style="margin-top:14px"><use href="#i-times"/></svg></div><div class="gc" style="left:520px;width:107px"><svg class="ic" width="10" height="14" style="margin-top:14px"><use href="#i-times"/></svg></div><div class="gc" style="left:628px;width:108px"><svg class="ic" width="10" height="14" style="margin-top:14px"><use href="#i-times"/></svg></div><div class="gc" style="left:737px;width:107px"><svg class="ic" width="10" height="14" style="margin-top:14px"><use href="#i-times"/></svg></div><div class="gc" style="left:845px;width:107px"><svg class="ic" width="10" height="14" style="margin-top:14px"><use href="#i-times"/></svg></div><div class="gc" style="left:953px;width:107px"><svg class="ic" width="10" height="14" style="margin-top:14px"><use href="#i-times"/></svg></div><div class="gc" style="left:1061px;width:107px"><svg class="ic" width="10" height="14" style="margin-top:14px"><use href="#i-times"/></svg></div><div class="gc" style="left:1169px;width:42px"><div class="bt dk" style="left:4px"><svg class="ic" width="16" height="14" style="fill:#fff;position:absolute;left:9px;top:9px"><use href="#i-edit"/></svg></div></div><div class="gc" style="left:1212px;width:42px"><div class="bt rd"><svg class="ic" width="10" height="14" style="fill:#fff;position:absolute;left:12.500px;top:9px"><use href="#i-times"/></svg></div></div></div><div class="gr" style="top:524px"><div class="gc" style="left:1px;width:151px">Amb.13</div><div class="gc" style="left:153px;width:150px">Altro</div><div class="gc" style="left:304px;width:107px"><svg class="ic" width="10" height="14" style="margin-top:14px"><use href="#i-times"/></svg></div><div class="gc" style="left:412px;width:107px"><svg class="ic" width="10" height="14" style="margin-top:14px"><use href="#i-times"/></svg></div><div class="gc" style="left:520px;width:107px"><svg class="ic" width="10" height="14" style="margin-top:14px"><use href="#i-times"/></svg></div><div class="gc" style="left:628px;width:108px"><svg class="ic" width="10" height="14" style="margin-top:14px"><use href="#i-times"/></svg></div><div class="gc" style="left:737px;width:107px"><svg class="ic" width="10" height="14" style="margin-top:14px"><use href="#i-times"/></svg></div><div class="gc" style="left:845px;width:107px"><svg class="ic" width="10" height="14" style="margin-top:14px"><use href="#i-times"/></svg></div><div class="gc" style="left:953px;width:107px"><svg class="ic" width="10" height="14" style="margin-top:14px"><use href="#i-times"/></svg></div><div class="gc" style="left:1061px;width:107px"><svg class="ic" width="10" height="14" style="margin-top:14px"><use href="#i-times"/></svg></div><div class="gc" style="left:1169px;width:42px"><div class="bt dk" style="left:4px"><svg class="ic" width="16" height="14" style="fill:#fff;position:absolute;left:9px;top:9px"><use href="#i-edit"/></svg></div></div><div class="gc" style="left:1212px;width:42px"><div class="bt rd"><svg class="ic" width="10" height="14" style="fill:#fff;position:absolute;left:12.500px;top:9px"><use href="#i-times"/></svg></div></div></div><div class="vl" style="left:0px"></div><div class="vl" style="left:152px"></div><div class="vl" style="left:303px"></div><div class="vl" style="left:411px"></div><div class="vl" style="left:519px"></div><div class="vl" style="left:627px"></div><div class="vl" style="left:736px"></div><div class="vl" style="left:844px"></div><div class="vl" style="left:952px"></div><div class="vl" style="left:1060px"></div><div class="vl" style="left:1168px"></div><div class="vl" style="left:1211px"></div><div class="vl" style="left:1254px;height:32px"></div><div class="vl" style="left:1271px"></div><div class="gsb"><div class="ua"></div></div></div>
</div>
<div id="psb"><div class="ua" style="left:4.500px;top:7px"></div><div class="th" style="top:17px;height:791px"></div><div class="da" style="left:4.500px;top:945px"></div></div>
</body></html>
